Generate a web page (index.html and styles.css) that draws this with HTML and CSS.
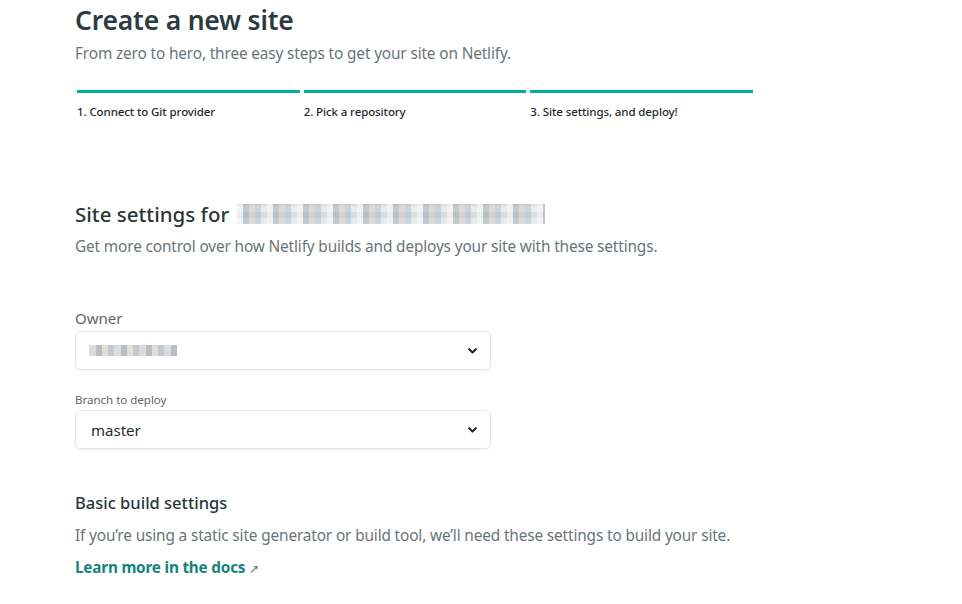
FILE: index.html
```html
<!DOCTYPE html>
<html lang="en">
<head>
<meta charset="utf-8">
<title>Create a new site</title>
<link rel="stylesheet" href="styles.css">
</head>
<body>
<main class="page">
  <header class="intro">
    <h1 class="title">Create a new site</h1>
    <p class="lead">From zero to hero, three easy steps to get your site on Netlify.</p>
  </header>
  <ol class="steps">
    <li class="step">1. Connect to Git provider</li>
    <li class="step">2. Pick a repository</li>
    <li class="step">3. Site settings, and deploy!</li>
  </ol>

  <section class="settings">
    <h2 class="settings-title">Site settings for <span class="blur blur-repo" aria-label="hidden repository"></span></h2>
    <p class="text">Get more control over how Netlify builds and deploys your site with these settings.</p>

    <div class="field">
      <label class="label label-lg">Owner</label>
      <div class="select">
        <span class="blur blur-owner"></span>
        <svg class="chev" width="9" height="6" viewBox="0 0 9 6"><path d="M1.2 1.2 L4.5 4.5 L7.8 1.2" fill="none" stroke="#1f2d33" stroke-width="2.2" stroke-linecap="round" stroke-linejoin="round"/></svg>
      </div>
    </div>

    <div class="field field-branch">
      <label class="label label-sm">Branch to deploy</label>
      <div class="select">
        <span class="value">master</span>
        <svg class="chev" width="9" height="6" viewBox="0 0 9 6"><path d="M1.2 1.2 L4.5 4.5 L7.8 1.2" fill="none" stroke="#1f2d33" stroke-width="2.2" stroke-linecap="round" stroke-linejoin="round"/></svg>
      </div>
    </div>
  </section>

  <section class="build">
    <h3 class="build-title">Basic build settings</h3>
    <p class="text">If you’re using a static site generator or build tool, we’ll need these settings to build your site.</p>
    <a class="docs" href="#">Learn more in the docs <span class="arrow">↗</span></a>
  </section>
</main>
</body>
</html>
```
FILE: styles.css
```css
* { box-sizing: border-box; }
html, body { margin: 0; padding: 0; background: #fff; }
body {
  font-family: "Noto Sans", "Open Sans", sans-serif;
  color: #2e3b40;
}
.page {
  padding: 0 0 0 75px;
  width: 760px;
}
.title {
  margin: 0;
  padding-top: 2px;
  font-size: 26.5px;
  line-height: 36px;
  font-weight: 600;
  color: #2e3a3f;
  letter-spacing: -0.2px;
}
.lead {
  margin: 6px 0 0;
  font-size: 15.4px;
  line-height: 20px;
  color: #6b7478;
  letter-spacing: -0.15px;
}
.steps {
  list-style: none;
  margin: 26px 0 0 2px;
  padding: 0;
  display: flex;
  gap: 4px;
  width: 676px;
}
.step {
  flex: 1;
  border-top: 3px solid #00ad9f;
  padding-top: 11px;
  font-size: 11.5px;
  line-height: 16px;
  color: #1f2a2e;
  font-weight: 500;
  letter-spacing: -0.1px;
}
.settings { margin-top: 80px; }
.settings-title {
  margin: 0;
  font-size: 20.5px;
  line-height: 28px;
  font-weight: 500;
  color: #2a353a;
  display: flex;
  align-items: center;
  gap: 8px;
}
.blur {
  display: inline-block;
  background-color: #c9ced2;
}
.blur-repo {
  width: 308px;
  height: 20px;
  background-image:
    repeating-linear-gradient(90deg, rgba(255,255,255,0.55) 0 6px, rgba(120,130,140,0.35) 6px 12px, rgba(210,200,190,0.5) 12px 18px, rgba(160,175,190,0.4) 18px 24px, rgba(255,255,255,0.2) 24px 30px),
    repeating-linear-gradient(0deg, rgba(255,255,255,0.4) 0 6px, rgba(0,0,0,0) 6px 12px);
  opacity: 0.85;
}
.text {
  margin: 8px 0 0;
  font-size: 15.4px;
  line-height: 22px;
  color: #6b7478;
  letter-spacing: -0.15px;
}
.field { margin-top: 50px; width: 416px; }
.field-branch { margin-top: 22px; }
.label { display: block; color: #5e676b; }
.label-lg { font-size: 15px; line-height: 20px; margin-bottom: 3px; }
.label-sm { font-size: 11.5px; line-height: 16px; margin-bottom: 2px; }
.select {
  height: 39px;
  border: 1px solid #e4e6e7;
  border-radius: 5px;
  box-shadow: 0 1px 2px rgba(0,0,0,0.06);
  display: flex;
  align-items: center;
  justify-content: space-between;
  padding: 0 12px 0 15px;
}
.blur-owner {
  width: 88px;
  height: 11px;
  margin-left: -2px;
  background-image: repeating-linear-gradient(90deg, #d8dbdf 0 7px, #b9bec4 7px 13px, #e2ddd6 13px 19px, #c4c9ce 19px 25px);
}
.value { font-size: 15px; color: #1f2a2e; }
.chev { display: block; margin-right: 1px; }
.build { margin-top: 42px; }
.build-title {
  margin: 0;
  font-size: 16.5px;
  line-height: 24px;
  font-weight: 500;
  color: #2a353a;
}
.build .text { margin-top: 10px; }
.docs {
  display: inline-block;
  margin-top: 10px;
  font-size: 15.3px;
  line-height: 20px;
  font-weight: 700;
  color: #15847b;
  text-decoration: none;
  letter-spacing: -0.2px;
}
.arrow { font-weight: 400; font-size: 12px; color: #6b7478; }
```
